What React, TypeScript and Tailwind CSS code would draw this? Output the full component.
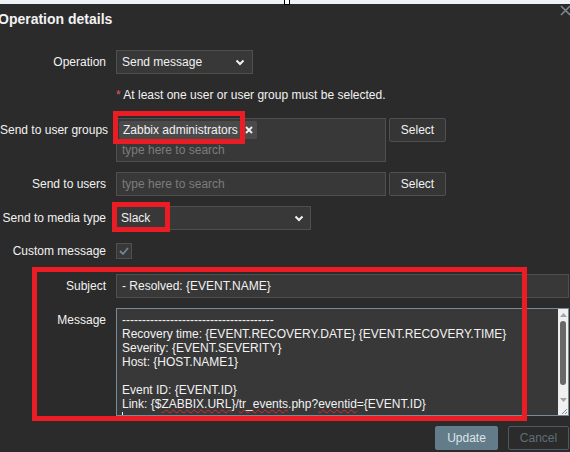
import React from "react";

function Chevron() {
  return (
    <svg width="10" height="7" viewBox="0 0 10 7" className="shrink-0">
      <path d="M1.5 1.5 L5 5 L8.5 1.5" fill="none" stroke="#f2f2f2" strokeWidth="2" />
    </svg>
  );
}

function Label({ children, top }: { children: React.ReactNode; top?: boolean }) {
  return (
    <div className={"text-right leading-[14px] whitespace-nowrap " + (top ? "self-start pt-[5px]" : "")}>
      {children}
    </div>
  );
}

function SelectBtn() {
  return (
    <button className="w-[57px] h-[24px] shrink-0 rounded-[2px] border border-[#4f4f4f] bg-[#353535] text-[12px] leading-[14px] text-[#f2f2f2]">
      Select
    </button>
  );
}

const wavy = "underline decoration-wavy decoration-[#e0282e] underline-offset-[1px] decoration-[1px]";

export default function App() {
  return (
    <div className="relative w-[570px] h-[452px] overflow-hidden bg-[#2b2b2b] font-['Liberation_Sans',Arial,sans-serif] text-[12px] text-[#f2f2f2]">
      {/* top strip */}
      <div className="h-[4px] bg-[#eef2f6]" />
      <div className="absolute left-[284px] top-[-1px] w-[6px] h-[6px] border border-black bg-white" />
      {/* close */}
      <svg className="absolute left-[560px] top-[5px]" width="11" height="11" viewBox="0 0 11 11">
        <path d="M1 1 L10 10 M10 1 L1 10" stroke="#7b8890" strokeWidth="1.6" />
      </svg>

      <h2 className="mt-[7px] ml-[-2px] text-[14px] font-bold leading-[16px] text-[#f2f2f2]">Operation details</h2>

      <div className="mt-[23px] flex flex-col pr-[1px]">
        {/* Operation */}
        <div className="grid grid-cols-[106px_1fr] gap-x-[10px] items-center">
          <Label>Operation</Label>
          <div className="w-[137px] h-[24px] flex items-center justify-between pl-[5px] pr-[7px] border border-[#4f4f4f] bg-[#383838]">
            <span className="leading-[14px]">Send message</span>
            <Chevron />
          </div>
        </div>

        {/* note */}
        <div className="mt-[14px] grid grid-cols-[106px_1fr] gap-x-[10px]">
          <div />
          <div className="leading-[14px] whitespace-nowrap">
            <span className="text-[#e45959]">*</span> At least one user or user group must be selected.
          </div>
        </div>

        {/* user groups */}
        <div className="mt-[16px] grid grid-cols-[106px_1fr] gap-x-[10px] items-start">
          <Label top>Send to user groups</Label>
          <div className="flex gap-[3px]">
            <div className="w-[270px] h-[44px] border border-[#4f4f4f] bg-[#383838] pl-[2px] pt-[2px] flex flex-col">
              <div className="self-start h-[18px] flex items-center gap-[7px] pl-[4px] pr-[4px] rounded-[2px] bg-[#4a4a4a]">
                <span className="leading-[14px]">Zabbix administrators</span>
                <svg width="8" height="8" viewBox="0 0 8 8">
                  <path d="M1 1 L7 7 M7 1 L1 7" stroke="#f2f2f2" strokeWidth="1.8" />
                </svg>
              </div>
              <div className="mt-[4px] pl-[3px] leading-[14px] text-[#7c7c7c]">type here to search</div>
            </div>
            <SelectBtn />
          </div>
        </div>

        {/* users */}
        <div className="mt-[10px] grid grid-cols-[106px_1fr] gap-x-[10px] items-center">
          <Label>Send to users</Label>
          <div className="flex gap-[3px]">
            <div className="w-[270px] h-[24px] flex items-center border border-[#4f4f4f] bg-[#383838] pl-[5px] leading-[14px] text-[#7c7c7c]">
              type here to search
            </div>
            <SelectBtn />
          </div>
        </div>

        {/* media type */}
        <div className="mt-[10px] grid grid-cols-[106px_1fr] gap-x-[10px] items-center">
          <Label>Send to media type</Label>
          <div className="w-[195px] h-[24px] flex items-center justify-between pl-[4px] pr-[6px] border border-[#4f4f4f] bg-[#383838]">
            <span className="leading-[14px]">Slack</span>
            <Chevron />
          </div>
        </div>

        {/* custom message */}
        <div className="mt-[13px] grid grid-cols-[106px_1fr] gap-x-[10px] items-center">
          <Label>Custom message</Label>
          <div className="w-[16px] h-[16px] border border-[#4f4f4f] bg-[#383838] flex items-center justify-center">
            <svg width="10" height="8" viewBox="0 0 10 8">
              <path d="M1 4 L4 7 L9 1" fill="none" stroke="#6f8591" strokeWidth="1.8" />
            </svg>
          </div>
        </div>

        {/* subject */}
        <div className="mt-[15px] grid grid-cols-[106px_1fr] gap-x-[10px] items-center">
          <Label>Subject</Label>
          <div className="h-[24px] flex items-center border border-[#4f4f4f] bg-[#383838] pl-[5px] leading-[14px]">
            - Resolved: {"{EVENT.NAME}"}
          </div>
        </div>

        {/* message */}
        <div className="mt-[10px] grid grid-cols-[106px_1fr] gap-x-[10px] items-start">
          <Label top>Message</Label>
          <div className="h-[108px] flex border border-[#768d99] bg-[#383838]">
            <div className="flex-1 overflow-hidden pl-[5px] pt-[4px] leading-[14px] whitespace-pre">
              <div>--------------------------------------</div>
              <div>Recovery time: {"{EVENT.RECOVERY.DATE} {EVENT.RECOVERY.TIME}"}</div>
              <div>Severity: {"{EVENT.SEVERITY}"}</div>
              <div>Host: {"{HOST.NAME1}"}</div>
              <div>&nbsp;</div>
              <div>Event ID: {"{EVENT.ID}"}</div>
              <div>
                Link: {"{$"}
                <span className={wavy}>ZABBIX.URL</span>
                {"}/"}
                <span className={wavy}>tr_events</span>
                .php?
                <span className={wavy}>eventid</span>
                {"={EVENT.ID}"}
              </div>
              <div className="h-[14px] flex items-end">
                <span className="inline-block w-[1px] h-[13px] bg-[#f2f2f2]" />
              </div>
            </div>
            <div className="w-[10px] flex flex-col bg-[#f0f0f0]">
              <div className="h-[11px] flex items-center justify-center">
                <svg width="7" height="4" viewBox="0 0 7 4"><path d="M0 4 L3.5 0 L7 4 Z" fill="#a3a3a3" /></svg>
              </div>
              <div className="flex-1 flex flex-col items-center">
                <div className="mt-[1px] w-[6px] h-[64px] rounded-full bg-[#686868]" />
              </div>
              <div className="h-[11px] flex items-center justify-center">
                <svg width="7" height="4" viewBox="0 0 7 4"><path d="M0 0 L7 0 L3.5 4 Z" fill="#a3a3a3" /></svg>
              </div>
              <div className="h-[10px] flex items-end justify-end">
                <svg width="8" height="8" viewBox="0 0 8 8">
                  <path d="M7 2 L2 7 M7 5 L5 7" stroke="#8a8a8a" strokeWidth="1" />
                </svg>
              </div>
            </div>
          </div>
        </div>

        {/* buttons */}
        <div className="mt-[10px] flex justify-end gap-[10px]">
          <button className="w-[63px] h-[24px] rounded-[2px] border border-[#637c8a] bg-[#637c8a] text-[12px] leading-[14px] text-[#dde4e8]">
            Update
          </button>
          <button className="w-[61px] h-[24px] rounded-[2px] border border-[#4c5b63] bg-transparent text-[12px] leading-[14px] text-[#5f6f78]">
            Cancel
          </button>
        </div>
      </div>

      {/* red annotation boxes */}
      <div className="absolute left-[113px] top-[111px] w-[132px] h-[33px] border-[5px] border-[#ec1c24]" />
      <div className="absolute left-[112px] top-[202px] w-[58px] h-[30px] border-[5px] border-[#ec1c24]" />
      <div className="absolute left-[32px] top-[267px] w-[495px] h-[154px] border-[5px] border-[#ec1c24]" />
    </div>
  );
}
